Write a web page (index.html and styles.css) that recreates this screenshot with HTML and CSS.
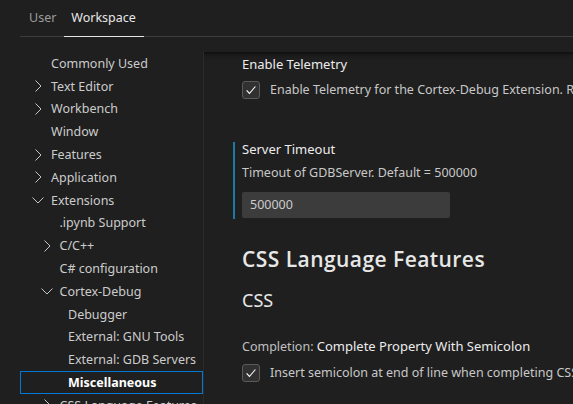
FILE: index.html
```html
<!DOCTYPE html>
<html>
<head>
<meta charset="utf-8">
<link rel="stylesheet" href="styles.css">
</head>
<body>
<div class="header">
  <div class="tab">User</div>
  <div class="tab active">Workspace</div>
</div>
<div class="body">
  <div class="tree">
    <div class="row l1"><span class="tw"></span><span>Commonly Used</span></div>
    <div class="row l1"><span class="tw"><svg viewBox="0 0 16 16"><polyline points="5.5,2.5 11,8 5.5,13.5"/></svg></span><span>Text Editor</span></div>
    <div class="row l1"><span class="tw"><svg viewBox="0 0 16 16"><polyline points="5.5,2.5 11,8 5.5,13.5"/></svg></span><span>Workbench</span></div>
    <div class="row l1"><span class="tw"></span><span>Window</span></div>
    <div class="row l1"><span class="tw"><svg viewBox="0 0 16 16"><polyline points="5.5,2.5 11,8 5.5,13.5"/></svg></span><span>Features</span></div>
    <div class="row l1"><span class="tw"><svg viewBox="0 0 16 16"><polyline points="5.5,2.5 11,8 5.5,13.5"/></svg></span><span>Application</span></div>
    <div class="row l1"><span class="tw"><svg viewBox="0 0 16 16"><polyline points="2.5,5.5 8,11 13.5,5.5"/></svg></span><span>Extensions</span></div>
    <div class="row l2"><span class="tw"></span><span>.ipynb Support</span></div>
    <div class="row l2"><span class="tw"><svg viewBox="0 0 16 16"><polyline points="5.5,2.5 11,8 5.5,13.5"/></svg></span><span>C/C++</span></div>
    <div class="row l2"><span class="tw"></span><span>C# configuration</span></div>
    <div class="row l2"><span class="tw"><svg viewBox="0 0 16 16"><polyline points="2.5,5.5 8,11 13.5,5.5"/></svg></span><span>Cortex-Debug</span></div>
    <div class="row l3"><span class="tw"></span><span>Debugger</span></div>
    <div class="row l3"><span class="tw"></span><span>External: GNU Tools</span></div>
    <div class="row l3"><span class="tw"></span><span>External: GDB Servers</span></div>
    <div class="row l3 selected"><span class="tw"></span><span>Miscellaneous</span></div>
    <div class="row l2"><span class="tw"><svg viewBox="0 0 16 16"><polyline points="5.5,2.5 11,8 5.5,13.5"/></svg></span><span>CSS Language Features</span></div>
  </div>
  <div class="content">
    <div class="item first">
      <div class="title">Enable Telemetry</div>
      <div class="check-row">
        <span class="checkbox"><svg viewBox="0 0 16 16"><polyline points="3,8.5 6.2,12 13,4"/></svg></span>
        <span class="desc">Enable Telemetry for the Cortex-Debug Extension. Reports errors and usage</span>
      </div>
    </div>
    <div class="item focused">
      <div class="title short">Server Timeout</div>
      <div class="desc block">Timeout of GDBServer. Default = 500000</div>
      <div class="input">500000</div>
    </div>
    <div class="group-title">CSS Language Features</div>
    <div class="sub-title">CSS</div>
    <div class="item third">
      <div class="title"><span class="cat">Completion: </span>Complete Property With Semicolon</div>
      <div class="check-row">
        <span class="checkbox"><svg viewBox="0 0 16 16"><polyline points="3,8.5 6.2,12 13,4"/></svg></span>
        <span class="desc">Insert semicolon at end of line when completing CSS properties.</span>
      </div>
    </div>
  </div>
</div>
</body>
</html>
```
FILE: styles.css
```css
html, body {
  margin: 0;
  padding: 0;
  background: #1f1f1f;
  overflow: hidden;
  height: 404px;
}
body {
  font-family: "Noto Sans", "Open Sans", sans-serif;
  font-size: 12.5px;
  color: #cccccc;
}
.header {
  display: flex;
  margin-left: 20px;
  height: 36px;
  border-bottom: 1px solid #3c3c3c;
}
.tab {
  padding: 0 8px 0 9px;
  line-height: 36px;
  height: 36px;
  box-sizing: border-box;
  color: #9d9d9d;
  font-size: 12.5px;
}
.tab.active {
  color: #e7e7e7;
  border-bottom: 1px solid #e7e7e7;
  height: 37px;
  margin-bottom: -1px;
  padding: 0 8px 0 7px;
}
.body {
  display: flex;
  margin-top: 15px;
}
.tree {
  width: 183px;
  margin-left: 20px;
  flex: none;
}
.row {
  height: 22.8px;
  box-sizing: border-box;
  display: flex;
  align-items: center;
  white-space: nowrap;
  color: #cccccc;
  font-size: 12.5px;
}
.row.l1 { padding-left: 10px; }
.row.l2 { padding-left: 18.5px; }
.row.l3 { padding-left: 27px; }
.tw {
  width: 16px;
  height: 16px;
  margin-right: 5px;
  flex: none;
  display: flex;
}
.tw svg {
  width: 16px;
  height: 16px;
  fill: none;
  stroke: #c5c5c5;
  stroke-width: 1;
}
.row.selected {
  border: 1px solid #0078d4;
  color: #ffffff;
  font-weight: 700;
}
.row.selected .tw {
  margin-right: 4px;
}
.content {
  flex: 1;
  border-left: 1px solid #2b2b2b;
  box-shadow: inset 0 6px 6px -6px #000;
  min-height: 360px;
  padding-left: 29px;
  padding-top: 3px;
  overflow: hidden;
  white-space: nowrap;
}
.item {
  border-left: 2px solid transparent;
  padding-left: 7px;
}
.item.focused {
  border-left-color: #1c7aa6;
  margin-top: 43px;
  padding-bottom: 1px;
}
.title {
  line-height: 18px;
  color: #ececec;
  font-weight: 400;
  font-size: 13px;
}
.title.short {
  line-height: 14px;
}
.cat {
  color: #c0c0c0;
  font-size: 12.5px;
}
.check-row {
  display: flex;
  align-items: center;
  margin-top: 8px;
  height: 18px;
}
.checkbox {
  width: 18px;
  height: 18px;
  box-sizing: border-box;
  background: #313131;
  border: 1px solid #5a5a5a;
  border-radius: 3px;
  flex: none;
  display: flex;
  align-items: center;
  justify-content: center;
}
.checkbox svg {
  width: 14px;
  height: 14px;
  fill: none;
  stroke: #ffffff;
  stroke-width: 1.3;
}
.desc {
  margin-left: 10px;
  color: #c8c8c8;
  line-height: 18px;
}
.desc.block {
  margin-left: 0;
  margin-top: 8px;
}
.input {
  margin-top: 10px;
  width: 208px;
  height: 26px;
  box-sizing: border-box;
  background: #3c3c3c;
  border-radius: 2px;
  padding-left: 8px;
  line-height: 26px;
  color: #cccccc;
}
.group-title {
  margin-top: 26px;
  margin-left: 9px;
  font-family: "Open Sans", "Noto Sans", sans-serif;
  font-size: 21px;
  font-weight: 600;
  letter-spacing: 0.45px;
  line-height: 28px;
  color: #e7e7e7;
}
.sub-title {
  margin-top: 15px;
  margin-left: 9px;
  font-size: 18px;
  line-height: 24px;
  color: #e7e7e7;
}
.item.third {
  margin-top: 25px;
}
```
